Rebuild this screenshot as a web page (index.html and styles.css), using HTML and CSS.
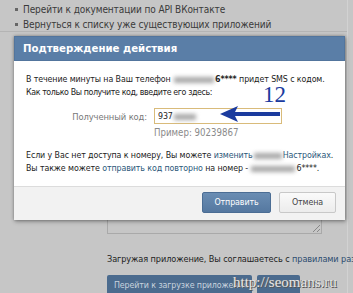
FILE: index.html
```html
<!DOCTYPE html>
<html lang="ru">
<head>
    <meta charset="UTF-8">
    <title>Подтверждение действия</title>
    <link rel="stylesheet" href="styles.css">
</head>
<body>
    <div class="page">
        <ul class="links">
            <li>Перейти к документации по API ВКонтакте</li>
            <li>Вернуться к списку уже существующих приложений</li>
        </ul>

        <div class="upload">
            <div class="area"><span class="grip"></span></div>
            <p class="agree">Загружая приложение, Вы соглашаетесь с <span class="link">правилами разме</span></p>
            <div class="page-buttons">
                <span class="page-btn">Перейти к загрузке приложения</span>
                <span class="page-btn short"></span>
            </div>
        </div>
    </div>

    <!-- модальное окно -->
    <div class="dialog">
        <div class="dlg-head">Подтверждение действия</div>
        <div class="dlg-body">
            <p class="intro">
                В течение минуты на Ваш телефон <span class="blur w40"></span><b>6****</b> придет SMS с кодом.<br>
                <span class="tight">Как только Вы получите код, введите его здесь:</span>
            </p>
            <div class="code-row">
                <label class="code-label">Полученный код:</label>
                <div class="code-input">937<span class="blur w22"></span></div>
            </div>
            <div class="hint">Пример: 90239867</div>
            <p class="more">
                Если у Вас нет доступа к номеру, Вы можете <span class="link">изменить</span><span class="blur w28"></span><span class="link">Настройках</span>.<br>
                Вы также можете <span class="link">отправить код повторно</span> на номер - <span class="blur w44"></span>6****.
            </p>
        </div>
        <div class="dlg-foot">
            <span class="btn btn-blue">Отправить</span>
            <span class="btn btn-grey">Отмена</span>
        </div>
    </div>

    <!-- пометки поверх скриншота -->
    <div class="mark-num">12</div>
    <svg class="mark-arrow" width="64" height="20" viewBox="0 0 64 20">
        <path d="M2 10 L20 2 L16 10 L20 18 Z" fill="#1b3b9e"/>
        <rect x="14" y="8" width="48" height="4" fill="#1b3b9e"/>
    </svg>
    <div class="watermark">http://seomans.ru</div>
</body>
</html>
```

FILE: styles.css
```css
* {
    margin: 0;
    padding: 0;
    box-sizing: border-box;
}

body {
    font-family: 'DejaVu Sans Condensed', 'DejaVu Sans', sans-serif;
    font-stretch: condensed;
    font-size: 8.8px;
    letter-spacing: -0.1px;
    background: #c6c6c6;
    color: #2e2e2e;
    width: 353px;
    height: 293px;
    overflow: hidden;
    position: relative;
}

.page {
    width: 348px;
    height: 293px;
    border-right: 1px solid #d2d2d2;
}

.links {
    list-style: none;
    padding: 2px 0 0 15px;
    height: 32px;
    border-bottom: 1px solid #b4b4b4;
    color: #3a3a3a;
    font-size: 10px;
}

.links li {
    line-height: 15px;
    white-space: nowrap;
}

.links li::before {
    content: "";
    display: inline-block;
    width: 3px;
    height: 3px;
    background: #666;
    margin: 0 5px 2px 0;
    vertical-align: middle;
}

.upload {
    padding: 118px 0 0 107px;
}

.area {
    width: 215px;
    height: 84px;
    border: 1px solid #a9a9a9;
    border-top: none;
    position: relative;
}

.grip {
    position: absolute;
    right: 1px;
    bottom: 1px;
    width: 7px;
    height: 7px;
    background: linear-gradient(135deg, transparent 45%, #888 45%, #888 55%, transparent 55%, transparent 75%, #888 75%, #888 85%, transparent 85%);
}

.agree {
    margin-top: 19px;
    line-height: 13px;
    white-space: nowrap;
    color: #222;
    font-size: 9.1px;
}

.agree .link {
    color: #2d4d70;
}

.page-buttons {
    display: flex;
    gap: 5px;
    margin-top: 9px;
}

.page-btn {
    background: #4b6b8e;
    color: #c9d3de;
    height: 22px;
    line-height: 21px;
    padding: 0 7px;
    width: 145px;
    white-space: nowrap;
    overflow: hidden;
    border-radius: 2px;
}

.page-btn.short {
    width: 43px;
}

.dialog {
    position: absolute;
    left: 14px;
    top: 36px;
    width: 331px;
    background: #fff;
    box-shadow: 0 0 3px rgba(0, 0, 0, 0.35), 1px 2px 4px rgba(0, 0, 0, 0.25);
}

.dlg-head {
    height: 25px;
    line-height: 24px;
    background: #5a7ea7;
    border: 1px solid #52759d;
    color: #fff;
    font-weight: bold;
    font-size: 11.3px;
    letter-spacing: 0;
    padding-left: 8px;
}

.dlg-body {
    padding: 12px 12px 11px;
    color: #222;
}

.intro, .more {
    line-height: 13px;
    white-space: nowrap;
}

.tight {
    letter-spacing: -0.4px;
}

.link {
    color: #2b587a;
}

.blur {
    display: inline-block;
    height: 6px;
    background: #a8a8a8;
    filter: blur(2px);
    vertical-align: middle;
    margin: 0 1px;
}

.w22 { width: 22px; }
.w28 { width: 28px; }
.w40 { width: 40px; }
.w44 { width: 44px; }

.code-row {
    display: flex;
    align-items: center;
    gap: 7px;
    margin-top: 9px;
}

.code-label {
    width: 121px;
    text-align: right;
    color: #777;
    font-size: 9.3px;
}

.code-input {
    width: 128px;
    height: 16px;
    line-height: 14px;
    border: 1px solid #d9bb7a;
    padding-left: 3px;
    color: #222;
}

.hint {
    margin: 3px 0 0 128px;
    font-size: 9.6px;
    letter-spacing: 0;
    line-height: 11px;
    color: #8a8a8a;
}

.more {
    margin-top: 11px;
}

.dlg-foot {
    height: 34px;
    background: #f2f2f2;
    border-top: 1px solid #dcdcdc;
    display: flex;
    justify-content: flex-end;
    gap: 8px;
    padding: 5px 9px 0 0;
}

.btn {
    height: 21px;
    line-height: 19px;
    text-align: center;
    border-radius: 2px;
}

.btn-blue {
    width: 69px;
    background: linear-gradient(#6a8db3, #5578a0);
    border: 1px solid #4b6d94;
    color: #fff;
}

.btn-grey {
    width: 57px;
    background: linear-gradient(#fafafa, #ececec);
    border: 1px solid #c8c8c8;
    color: #444;
}

.mark-num {
    position: absolute;
    left: 263px;
    top: 86px;
    font-family: 'Liberation Serif', serif;
    font-stretch: normal;
    font-size: 23px;
    line-height: 17px;
    letter-spacing: 0;
    color: #1b3b9e;
}

.mark-arrow {
    position: absolute;
    left: 218px;
    top: 104px;
}

.watermark {
    position: absolute;
    left: 233px;
    top: 274px;
    font-family: 'Liberation Serif', serif;
    font-stretch: normal;
    font-size: 15px;
    letter-spacing: 0;
    color: #e6e6e6;
    text-shadow: 1px 1px 0 #555, -1px 0 0 #777;
}
```
